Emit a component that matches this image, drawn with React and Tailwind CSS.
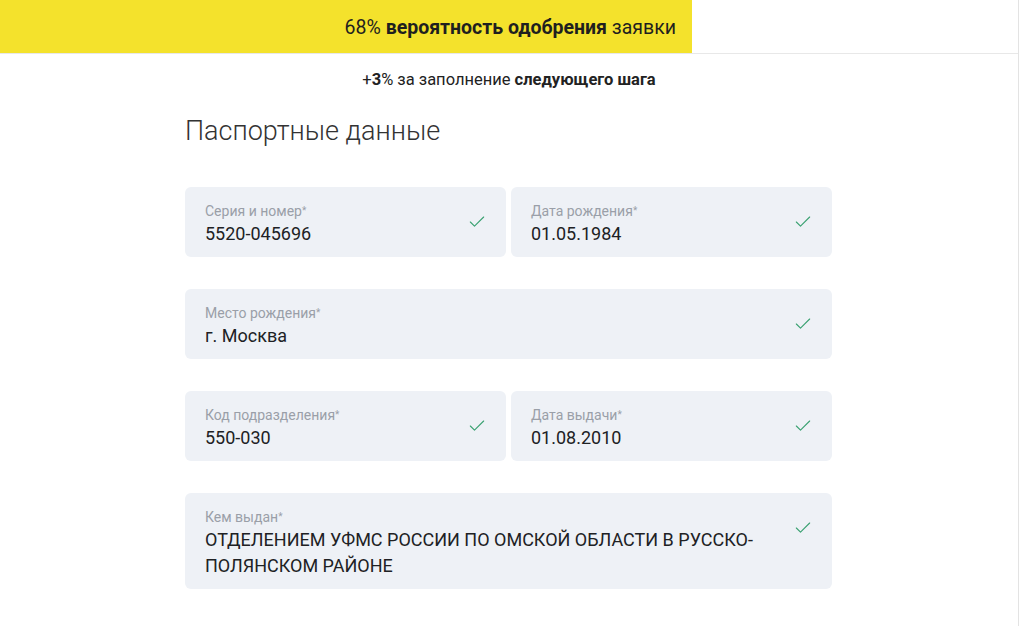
import { Check } from "lucide-react";

function Field({ label, value, className = "" }) {
  return (
    <div
      className={`flex items-start justify-between rounded-md bg-[#eef1f6] pl-5 pr-[19px] pt-[16px] pb-[10px] ${className}`}
    >
      <div className="min-w-0">
        <div className="text-[14px] leading-[16px] text-[#9a9fa8]">
          {label}
          <span className="text-[10px] align-top">*</span>
        </div>
        <div className="mt-[2px] text-[18px] leading-[26px] text-[#202124]">{value}</div>
      </div>
      <Check className="mt-[9px] ml-6 h-5 w-5 shrink-0 text-[#38a070]" strokeWidth={1.3} />
    </div>
  );
}

export default function App() {
  return (
    <div className="h-[626px] overflow-hidden bg-white font-['Roboto',sans-serif]">
      <div className="w-[1019px] h-full border-r border-[#e3e3e3]">
        <div className="flex h-[54px] border-b border-[#e8e8e8]">
          <div className="w-[692px] bg-[#f4e22c] flex items-center justify-end pr-[16px] pt-[2px] text-[19.5px] text-[#1f1f1f]">
            <span>
              68% <b className="font-bold">вероятность одобрения</b> заявки
            </span>
          </div>
        </div>

        <div className="mt-[14px] text-center text-[16.5px] text-[#222]">
          <span className="font-normal">+</span>
          <b>3</b>% за заполнение <b>следующего шага</b>
        </div>

        <div className="w-[647px] ml-[185px]">
          <h1 className="mt-[20px] text-[27px] font-light leading-[36px] text-[#333]">
            Паспортные данные
          </h1>

          <div className="mt-[38px] grid grid-cols-2 gap-[5px]">
            <Field label="Серия и номер" value="5520-045696" />
            <Field label="Дата рождения" value="01.05.1984" />
          </div>

          <Field className="mt-[32px]" label="Место рождения" value="г. Москва" />

          <div className="mt-[32px] grid grid-cols-2 gap-[5px]">
            <Field label="Код подразделения" value="550-030" />
            <Field label="Дата выдачи" value="01.08.2010" />
          </div>

          <Field
            className="mt-[32px]"
            label="Кем выдан"
            value="ОТДЕЛЕНИЕМ УФМС РОССИИ ПО ОМСКОЙ ОБЛАСТИ В РУССКО-ПОЛЯНСКОМ РАЙОНЕ"
          />
        </div>
      </div>
    </div>
  );
}
